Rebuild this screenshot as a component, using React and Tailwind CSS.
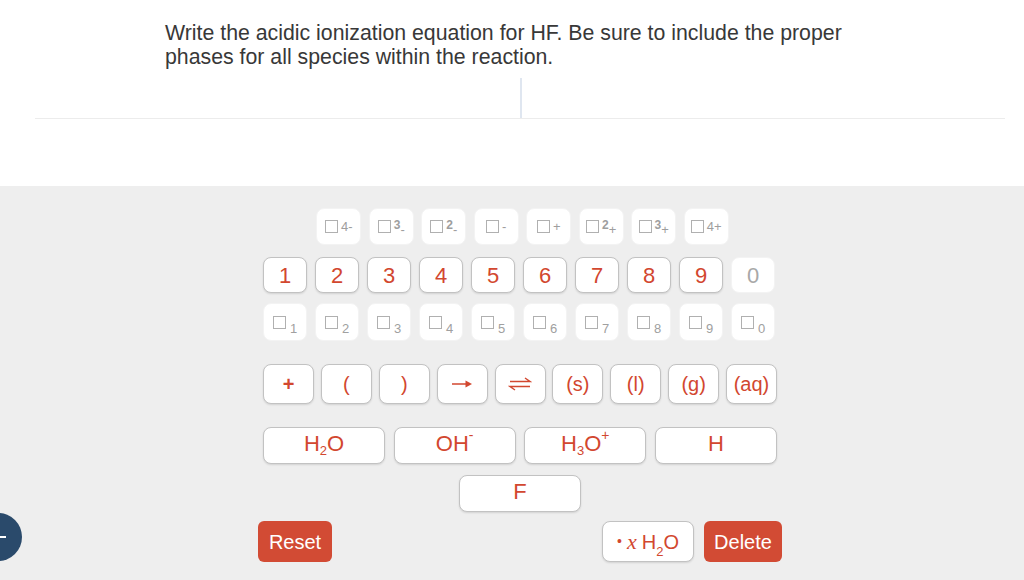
import React from "react";

const charges = [
  { d: "4", s: "-", up: false },
  { d: "3", s: "-", up: true },
  { d: "2", s: "-", up: true },
  { d: "", s: "-", up: false },
  { d: "", s: "+", up: false },
  { d: "2", s: "+", up: true },
  { d: "3", s: "+", up: true },
  { d: "4", s: "+", up: false },
];

const digits = ["1", "2", "3", "4", "5", "6", "7", "8", "9"];
const subs = ["1", "2", "3", "4", "5", "6", "7", "8", "9", "0"];

const activeBtn =
  "bg-white border border-[#c2c2c2] rounded-[8px] shadow-[0_1px_2px_rgba(0,0,0,0.12)] text-[#d2472f] flex items-center justify-center";
const idleBtn =
  "bg-white border border-[#f3f3f3] rounded-[8px] text-[#a8a8a8] flex items-center justify-center";

const Box = () => (
  <span className="inline-block w-[13px] h-[13px] border-[1.5px] border-[#b0b0b0]" />
);

const Equil = () => (
  <svg width="24" height="14" viewBox="0 0 24 14" fill="none" stroke="#d2472f" strokeWidth="1.4">
    <path d="M2 4.5H22L17 1" />
    <path d="M22 9.5H2L7 13" />
  </svg>
);

const Arrow = () => (
  <svg width="22" height="10" viewBox="0 0 22 10">
    <path d="M1 5H16" stroke="#d2472f" strokeWidth="1.5" />
    <path d="M14.5 1.6L21 5L14.5 8.4Z" fill="#d2472f" />
  </svg>
);

const Sub = ({ children }) => (
  <span className="relative top-[7px] text-[13px] leading-none">{children}</span>
);
const Sup = ({ children }) => (
  <span className="relative -top-[9px] text-[14px] leading-none">{children}</span>
);

export default function App() {
  return (
    <div className="relative w-[1024px] h-[580px] overflow-hidden bg-white font-['Liberation_Sans',Arial,sans-serif]">
      {/* question */}
      <div className="h-[186px] bg-white">
        <p className="pl-[165px] pt-[21px] w-[890px] text-[21.3px] leading-[24px] text-[#383838]">
          Write the acidic ionization equation for HF. Be sure to include the proper phases for all
          species within the reaction.
        </p>
        <div className="ml-[35px] w-[970px] mt-[9px] h-[41px] border-b border-[#ececec] flex">
          <div className="ml-[485px] w-[2px] h-[40px] bg-[#dfe6f0]" />
        </div>
      </div>

      {/* keypad */}
      <div className="h-[394px] bg-[#eeeeee] pt-[22px]">
        <div className="ml-[263px] w-[514px] flex flex-col">
          <div className="flex justify-center gap-[7.5px] pl-[5px]">
            {charges.map((c, i) => (
              <div key={i} className={`${idleBtn} w-[45px] h-[37px] gap-[3px]`}>
                <Box />
                <span className="flex items-start self-start mt-[11px] text-[13px] leading-[13px] text-[#9e9e9e]">
                  {c.d && (
                    <span className={c.up ? "relative -top-[1px] font-bold text-[12px]" : ""}>{c.d}</span>
                  )}
                  <span className={c.up ? "relative top-[3px]" : ""}>{c.s}</span>
                </span>
              </div>
            ))}
          </div>

          <div className="flex gap-[8px] mt-[12px]">
            {digits.map((d) => (
              <div key={d} className={`${activeBtn} w-[44px] h-[36px] text-[22px]`}>
                {d}
              </div>
            ))}
            <div className={`${idleBtn} w-[44px] h-[36px] text-[22px]`}>0</div>
          </div>

          <div className="flex gap-[8px] mt-[10px]">
            {subs.map((d) => (
              <div key={d} className={`${idleBtn} w-[44px] h-[38px] gap-[4px]`}>
                <Box />
                <span className="relative top-[6px] text-[13px] leading-none text-[#a0a0a0]">{d}</span>
              </div>
            ))}
          </div>

          <div className="flex justify-between mt-[23px] text-[20px]">
            <div className={`${activeBtn} w-[51px] h-[40px] font-bold`}>+</div>
            <div className={`${activeBtn} w-[51px] h-[40px]`}>(</div>
            <div className={`${activeBtn} w-[51px] h-[40px]`}>)</div>
            <div className={`${activeBtn} w-[51px] h-[40px]`}>
              <Arrow />
            </div>
            <div className={`${activeBtn} w-[51px] h-[40px]`}>
              <Equil />
            </div>
            <div className={`${activeBtn} w-[51px] h-[40px]`}>(s)</div>
            <div className={`${activeBtn} w-[51px] h-[40px]`}>(l)</div>
            <div className={`${activeBtn} w-[51px] h-[40px]`}>(g)</div>
            <div className={`${activeBtn} w-[51px] h-[40px]`}>(aq)</div>
          </div>

          <div className="flex justify-between mt-[23px] text-[22px]">
            <div className={`${activeBtn} w-[122px] h-[37px] pb-[4px]`}>
              H<Sub>2</Sub>O
            </div>
            <div className={`${activeBtn} w-[122px] h-[37px] pb-[4px]`}>
              OH<Sup>-</Sup>
            </div>
            <div className={`${activeBtn} w-[122px] h-[37px] pb-[4px]`}>
              H<Sub>3</Sub>O<Sup>+</Sup>
            </div>
            <div className={`${activeBtn} w-[122px] h-[37px] pb-[4px]`}>H</div>
          </div>

          <div className="flex justify-center mt-[11px] text-[22px]">
            <div className={`${activeBtn} w-[122px] h-[37px] pb-[4px]`}>F</div>
          </div>

          <div className="flex justify-between mt-[9px] -ml-[5px] w-[524px]">
            <button className="w-[74px] h-[41px] rounded-[6px] bg-[#d24b34] text-white text-[20px]">
              Reset
            </button>
            <div className="flex gap-[10px]">
              <button className={`${activeBtn} w-[92px] h-[41px] text-[20px] gap-[5px]`}>
                <span className="text-[14px]">•</span>
                <span className="italic font-['Liberation_Serif',serif] text-[22px]">x</span>
                <span>
                  H<Sub>2</Sub>O
                </span>
              </button>
              <button className="w-[78px] h-[41px] rounded-[6px] bg-[#d24b34] text-white text-[20px]">
                Delete
              </button>
            </div>
          </div>
        </div>
      </div>

      {/* side toggle */}
      <div className="absolute -left-[26px] top-[513px] w-[48px] h-[48px] rounded-full bg-[#2a4a6b]">
        <div className="absolute left-[26px] top-[23px] w-[6px] h-[2px] bg-white" />
      </div>
    </div>
  );
}
